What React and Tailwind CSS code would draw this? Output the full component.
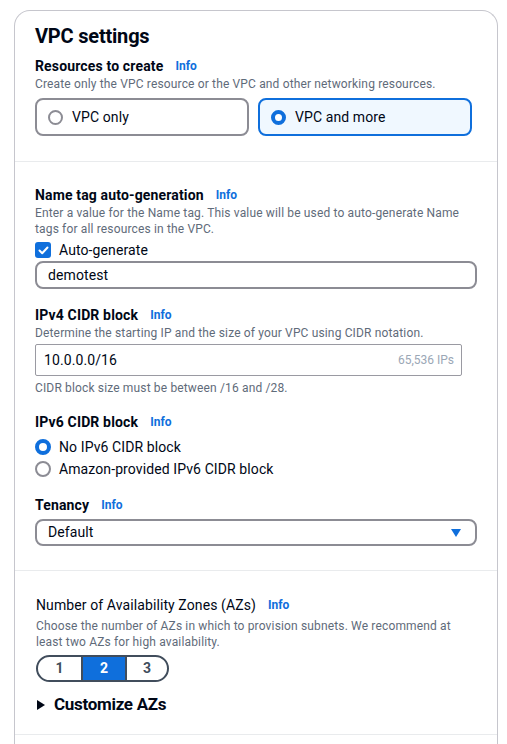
import React from "react";

function Info() {
  return <span className="ml-[12px] text-[12px] font-bold tracking-normal text-[#0f6fdc]">Info</span>;
}

function Radio({ checked, size = 16 }) {
  if (checked) {
    return (
      <span
        className="inline-block shrink-0 rounded-full border-[4px] border-[#0f6fdc] bg-white"
        style={{ width: size, height: size }}
      />
    );
  }
  return (
    <span
      className="inline-block shrink-0 rounded-full border-2 border-[#8c8c94] bg-white"
      style={{ width: size, height: size }}
    />
  );
}

function Label({ children, bold = true }) {
  return (
    <div
      className={`flex items-center text-[14px] leading-[20px] ${
        bold ? "font-bold tracking-[0.15px]" : "font-normal tracking-[0.1px]"
      }`}
    >
      <span>{children}</span>
      <Info />
    </div>
  );
}

function Desc({ children, className = "" }) {
  return (
    <div className={`text-[12px] leading-[16px] tracking-[0.15px] text-[#5f6b7a] ${className}`}>{children}</div>
  );
}

export default function App() {
  return (
    <div className="h-[744px] overflow-hidden bg-white font-['Roboto',sans-serif] text-[#000716]">
      <div className="ml-[14px] mt-[10px] w-[484px] rounded-t-[16px] border border-[#c6c6cd] border-b-0">
        {/* Section 1 */}
        <div className="px-[20px] pt-[13px] pb-[25px]">
          <h2 className="text-[20px] leading-[24px] font-bold tracking-[-0.2px]">VPC settings</h2>
          <div className="mt-[8px]">
            <Label>Resources to create</Label>
          </div>
          <Desc>Create only the VPC resource or the VPC and other networking resources.</Desc>
          <div className="mt-[6px] grid w-[437px] grid-cols-2 gap-[9px]">
            <div className="flex h-[38px] items-center gap-[9px] rounded-[8px] border-2 border-[#8c8c94] bg-white pl-[11px]">
              <Radio checked={false} size={15} />
              <span className="text-[14px] tracking-[0.1px]">VPC only</span>
            </div>
            <div className="flex h-[38px] items-center gap-[9px] rounded-[8px] border-2 border-[#0f6fdc] bg-[#f0f8ff] pl-[11px]">
              <Radio checked={true} size={15} />
              <span className="text-[14px] tracking-[0.1px]">VPC and more</span>
            </div>
          </div>
        </div>

        {/* Section 2 */}
        <div className="border-t border-[#e9ebed] px-[20px] pt-[23px] pb-[24px]">
          <Label>Name tag auto-generation</Label>
          <Desc>
            Enter a value for the Name tag. This value will be used to auto-generate Name
            <br />
            tags for all resources in the VPC.
          </Desc>
          <div className="mt-[3px] flex h-[20px] items-center gap-[8px]">
            <span className="flex h-[16px] w-[16px] items-center justify-center rounded-[3px] bg-[#0f6fdc]">
              <svg width="11" height="9" viewBox="0 0 11 9" fill="none">
                <path d="M1.5 4.5 L4.2 7.2 L9.5 1.5" stroke="white" strokeWidth="2" strokeLinecap="round" strokeLinejoin="round" />
              </svg>
            </span>
            <span className="text-[14px] tracking-[0.1px]">Auto-generate</span>
          </div>
          <div className="mt-[1px] flex h-[28px] w-[442px] items-center rounded-[8px] border-2 border-[#8c8c94] px-[11px] text-[14px] tracking-[0.1px]">
            demotest
          </div>

          <div className="mt-[16px]">
            <Label>IPv4 CIDR block</Label>
          </div>
          <Desc>Determine the starting IP and the size of your VPC using CIDR notation.</Desc>
          <div className="mt-[3px] flex h-[32px] w-[427px] items-center justify-between rounded-[2px] border border-[#9a9aa2] pl-[8px] pr-[7px]">
            <span className="text-[14px] tracking-[0.1px]">10.0.0.0/16</span>
            <span className="text-[12px] text-[#9ba7b6]">65,536 IPs</span>
          </div>
          <Desc className="mt-[4px]">CIDR block size must be between /16 and /28.</Desc>

          <div className="mt-[16px]">
            <Label>IPv6 CIDR block</Label>
          </div>
          <div className="mt-[5px] flex flex-col gap-[2px]">
            <div className="flex h-[20px] items-center gap-[8px]">
              <Radio checked={true} />
              <span className="text-[14px] tracking-[0.1px]">No IPv6 CIDR block</span>
            </div>
            <div className="flex h-[20px] items-center gap-[8px]">
              <Radio checked={false} />
              <span className="text-[14px] tracking-[0.1px]">Amazon-provided IPv6 CIDR block</span>
            </div>
          </div>

          <div className="mt-[16px]">
            <Label>Tenancy</Label>
          </div>
          <div className="mt-[4px] flex h-[27px] w-[442px] items-center justify-between rounded-[8px] border-2 border-[#8c8c94] pl-[11px] pr-[14px] text-[14px] tracking-[0.1px]">
            <span>Default</span>
            <svg width="10" height="8" viewBox="0 0 10 8">
              <path d="M0 0 H10 L5 8 Z" fill="#0f6fdc" />
            </svg>
          </div>
        </div>

        {/* Section 3 */}
        <div className="border-t border-[#e9ebed] pl-[21px] pr-[20px] pt-[24px] pb-[17px]">
          <Label bold={false}>Number of Availability Zones (AZs)</Label>
          <Desc className="mt-[3px]">
            Choose the number of AZs in which to provision subnets. We recommend at
            <br />
            least two AZs for high availability.
          </Desc>
          <div className="mt-[5px] flex h-[27px] w-[133px] overflow-hidden rounded-full border-2 border-[#414d5c] text-[14px] font-bold">
            <div className="flex w-[43px] items-center justify-center text-[#414d5c]">1</div>
            <div className="flex w-[46px] items-center justify-center border-x-2 border-[#414d5c] bg-[#0f6fdc] text-white">2</div>
            <div className="flex flex-1 items-center justify-center text-[#414d5c]">3</div>
          </div>
          <div className="mt-[11px] flex h-[24px] items-center">
            <svg width="8" height="10" viewBox="0 0 8 10" className="ml-[1px] mr-[9px]">
              <path d="M0 0 L8 5 L0 10 Z" fill="#000716" />
            </svg>
            <span className="text-[17px] font-bold tracking-[-0.3px]">Customize AZs</span>
          </div>
        </div>

        <div className="h-[60px] border-t border-[#e9ebed]" />
      </div>
    </div>
  );
}
